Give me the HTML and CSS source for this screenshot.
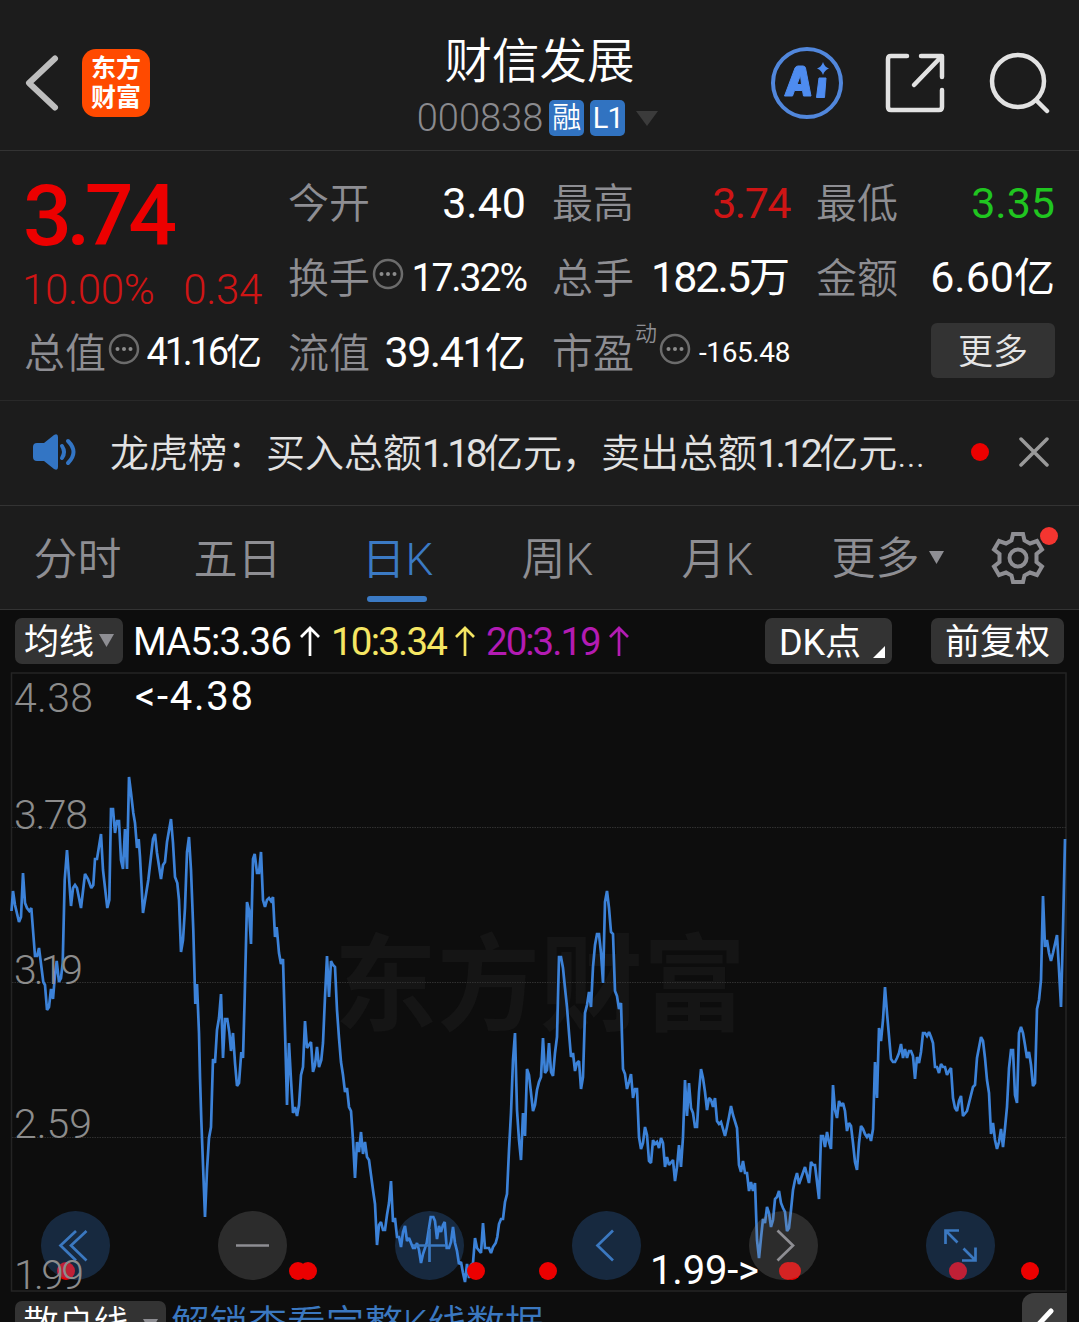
FILE: index.html
```html
<!DOCTYPE html>
<html lang="zh-CN">
<head>
<meta charset="utf-8">
<title>财信发展 000838</title>
<link rel="stylesheet" href="styles.css">
</head>
<body>
<header class="header">
  <div class="header-left">
    <svg class="back" width="36" height="60" viewBox="0 0 36 60"><path d="M31 5.500 L5 30 L31 54.500" fill="none" stroke="#bdbdbd" stroke-width="6" stroke-linecap="round" stroke-linejoin="round"/></svg>
    <div class="logo"><span>东方</span><span>财富</span></div>
  </div>
  <div class="title">
    <h1>财信发展</h1>
    <div class="code"><span class="num">000838</span><i class="badge">融</i><i class="badge level">L1</i><svg width="22" height="15" viewBox="0 0 22 15"><path d="M0 0H22L11 15Z" fill="#3b3b3b"/></svg></div>
  </div>
  <div class="header-right">
    <svg width="74" height="74" viewBox="0 0 74 74"><circle cx="37" cy="37" r="34" fill="none" stroke="#5187dc" stroke-width="4"/><g fill="#4e8cf0" stroke="#4e8cf0" stroke-width="1" stroke-linejoin="round"><path fill-rule="evenodd" d="M14.500 50L25 22Q26 20 28 20H33Q35 20 35.500 22L41 50H33.500L32.500 44.500H24.500L22.500 50ZM27 38.500H31.500L30.500 29Z"/><path d="M49 32H56L54.500 51.500H46.500Z"/></g><path d="M53 16 Q54.500 21 59 22.500 Q54.500 24 53 29 Q51.500 24 47 22.500 Q51.500 21 53 16Z" fill="#4e8cf0"/></svg>
    <svg width="60" height="60" viewBox="0 0 60 60"><g fill="none" stroke="#e2e2e2" stroke-width="4.500" stroke-linecap="round" stroke-linejoin="round"><path d="M22 3H6Q3 3 3 6V54Q3 57 6 57H54Q57 57 57 54V37"/><path d="M36 3H57V24M56 4L29 32"/></g></svg>
    <svg width="62" height="62" viewBox="0 0 62 62"><g fill="none" stroke="#e2e2e2" stroke-width="4.500" stroke-linecap="round"><circle cx="30" cy="29" r="26"/><path d="M48.500 48.500L59 59"/></g></svg>
  </div>
</header>

<section class="quote">
  <div class="last">
    <strong>3.74</strong>
    <div class="change"><span>10.00%</span><span>0.34</span></div>
  </div>
  <div class="cell"><label>今开</label><b>3.40</b></div>
  <div class="cell"><label>最高</label><b class="up">3.74</b></div>
  <div class="cell"><label>最低</label><b class="down">3.35</b></div>
  <div class="cell"><label>换手</label><svg class="info" width="32" height="32" viewBox="0 0 32 32"><circle cx="16" cy="16" r="14" fill="none" stroke="#6c6c6c" stroke-width="2.500"/><g fill="#8c8c8c"><circle cx="9.500" cy="16" r="2"/><circle cx="16" cy="16" r="2"/><circle cx="22.500" cy="16" r="2"/></g></svg><b class="mid">17.32%</b></div>
  <div class="cell"><label>总手</label><b class="tight">182.5<em>万</em></b></div>
  <div class="cell"><label>金额</label><b>6.60<em>亿</em></b></div>
  <div class="cell"><label>总值</label><svg class="info" width="32" height="32" viewBox="0 0 32 32"><circle cx="16" cy="16" r="14" fill="none" stroke="#6c6c6c" stroke-width="2.500"/><g fill="#8c8c8c"><circle cx="9.500" cy="16" r="2"/><circle cx="16" cy="16" r="2"/><circle cx="22.500" cy="16" r="2"/></g></svg><b class="mid narrow">41.16<em>亿</em></b></div>
  <div class="cell"><label>流值</label><b class="tight wide">39.41<em>亿</em></b></div>
  <div class="cell"><label>市盈</label><sup>动</sup><svg class="info" width="32" height="32" viewBox="0 0 32 32"><circle cx="16" cy="16" r="14" fill="none" stroke="#6c6c6c" stroke-width="2.500"/><g fill="#8c8c8c"><circle cx="9.500" cy="16" r="2"/><circle cx="16" cy="16" r="2"/><circle cx="22.500" cy="16" r="2"/></g></svg><b class="small">-165.48</b></div>
  <div class="cell end"><button class="more">更多</button></div>
</section>

<section class="news">
  <svg width="46" height="36" viewBox="0 0 46 36"><path d="M5 9H12L22 1Q26 -1 26 3V33Q26 37 22 35L12 27H5Q1 27 1 23V13Q1 9 5 9Z" fill="#3375c4"/><g fill="none" stroke="#3375c4" stroke-width="4" stroke-linecap="round"><path d="M30 12Q34 18 30 24M36 7Q47 18 36 29"/></g></svg>
  <p>龙虎榜：买入总额<span class="amount">1.18</span>亿元，卖出总额<span class="amount">1.12</span>亿元...</p>
  <i class="dot"></i>
  <svg width="30" height="30" viewBox="0 0 30 30"><path d="M2 2L28 28M28 2L2 28" stroke="#9a9a9a" stroke-width="3.500" stroke-linecap="round"/></svg>
</section>

<nav class="tabs">
  <a>分时</a><a>五日</a><a class="active">日K</a><a>周K</a><a>月K</a>
  <a class="drop">更多<svg width="15" height="13" viewBox="0 0 15 13"><path d="M0 0H15L7.500 13Z" fill="#8e8e93"/></svg></a>
  <div class="gear">
    <svg width="54" height="54" viewBox="-27 -27 54 54"><g fill="none" stroke="#8e8e93" stroke-width="4"><circle r="8.500"/><path d="M-5 -24H5L6.500 -17.500L12 -14.500L19 -17L24 -8.500L18.500 -4V4L24 8.500L19 17L12 14.500L6.500 17.500L5 24H-5L-6.500 17.500L-12 14.500L-19 17L-24 8.500L-18.500 4V-4L-24 -8.500L-19 -17L-12 -14.500L-6.500 -17.500Z"/></g></svg>
    <i class="dot"></i>
  </div>
</nav>

<main class="panel">
  <div class="toolbar">
    <button class="chip ma">均线<svg width="15" height="13" viewBox="0 0 15 13"><path d="M0 0H15L7.500 13Z" fill="#8e8e93"/></svg></button>
    <span class="ma5">MA5:3.36<svg class="arrow" width="20" height="30" viewBox="0 0 20 30"><path d="M10 30V2M1 11L10 2L19 11"/></svg></span>
    <span class="ma10">10:3.34<svg class="arrow" width="20" height="30" viewBox="0 0 20 30"><path d="M10 30V2M1 11L10 2L19 11"/></svg></span>
    <span class="ma20">20:3.19<svg class="arrow" width="20" height="30" viewBox="0 0 20 30"><path d="M10 30V2M1 11L10 2L19 11"/></svg></span>
    <button class="chip dk">DK点<svg width="12" height="12" viewBox="0 0 12 12"><path d="M12 0V12H0Z" fill="#fff"/></svg></button>
    <button class="chip fq">前复权</button>
  </div>
  <svg class="chart" width="1079" height="621" viewBox="0 672 1079 621">
    <text class="watermark" x="334" y="1022" textLength="412" lengthAdjust="spacingAndGlyphs">东方财富</text>
    <rect x="11.500" y="673" width="1054.500" height="618" fill="none" stroke="#242424" stroke-width="1.500"/>
    <path d="M12 827.500H1066M12 982.500H1066M12 1137.500H1066" stroke="#303030" stroke-width="1" stroke-dasharray="1.500 1"/>
    <polyline class="line" points="11.500,911 13,891 15,905 19,922 21,917 23,873 25,903 27,908 29.300,911 31.300,908 35,956 37,956 39,948 43.300,982 45,985 47,1010 49,1007 51,989 53,999 55,975 56.700,961 59,982 61,978 62.700,963 64.700,880 67,850 71,906 73,888 75,885 77,888 81,908 85,874 88,879 91.300,888 93.300,885 95,859 97,859 101,834 103,870 107.300,908 109.300,900 111,809 113,809 115,833 117,821 119,821 121,860 123,869 125,829 127,869 129,777 131,793 133.300,813 135,823 137,848 138.700,839 140,857 143,913 148.300,880 153,839 155,834 157,853 161,879 163,865 165,862 167,842 171,819 173,843 175,877 177.300,883 179,900 181,952 183,940 185,908 187,852 189,837 191,870 193.300,930 195.300,1004 197,984 199,1033 200,1077 201.300,1120 205,1217 207,1170 209,1138 211,1127 213,1059 215,1063 217,1030 219,1018 221,994 223,1058 225,1019 227.300,1019 229.300,1032 231,1051 233,1033 235,1063 237,1086 239,1083 241.300,1052 243,1058 244.700,997 247,902 249,910 251,944 253,859 254.700,854 257,873 259,873 261,852 263,900 265,907 267,900 269,898 271,901 273,897 275,937 276.700,927 279,953 281,964 283,959 285,1030 287,1105 289,1043 291,1080 293,1113 295,1107 297,1116 299,1105 301,1075 303,1067 305,1021 307,1048 309,1045 311,1042 313,1072 315,1065 317,1047 319,1067 321.300,1060 323,1043 325,997 327,956 329,997 331,961 333,965 335,967 337,1010 339,1038 341,1062 343,1075 345,1092 347,1088 349,1107 351,1111 353,1140 355,1178 357,1142 359,1152 361,1132 363,1154 365,1142 367,1157 369,1160 371,1175 373,1190 375,1204 377,1245 379,1225 381,1222 383,1230 385,1230 387,1215 389,1203 391,1181 393,1222 395,1218 397,1237 399,1237 401,1247 403,1232 405,1226 407,1241 409,1238 413,1248 415,1248 417,1243 419,1250 421,1263 423,1254 426.700,1243 428.700,1230 430.700,1217 433.300,1217 435,1221 437,1239 439,1226 441,1232 443,1225 444.700,1222 446.700,1248 449,1248 451,1242 453,1227 455,1243 457,1251 459,1264 461,1262 463,1273 465,1282 467,1264 469,1278 471,1265 473,1263 475,1238 477,1248 481,1253 483,1223 485,1248 489,1248 491,1253 493,1247 495.700,1243 497.300,1237 499,1224 501,1219 503,1219 505,1202 507,1194 509,1150 511,1113 513,1060 515,1033 517,1110 519,1140 521,1160 523,1113 525,1136 527,1069 529,1075 531,1093 533,1111 535,1105 537,1090 539,1082 541,1077 543,1038 545,1073 547,1070 549,1043 551,1072 553,1076 555,1053 557,1037 559,957 561,957 563,968 565,988 567,1007 569,1033 571,1057 573,1053 575,1071 577,1063 579,1061 581,1089 583,1077 585,1013 587,1005 589,992 591,1007 593,967 595,945 597,934 599,934 601,953 603,983 605,902 607,891 609,908 611,932 613,934 615,991 617,996 619,1009 621,1003 623,1069 625,1074 627,1089 629,1082 631,1074 633,1098 635,1089 637,1089 639,1137 641,1149 643,1143 645,1127 647,1135 649,1161 651,1163 653,1140 655,1144 657,1142 659,1148 661,1138 663,1143 665,1167 667,1157 669,1165 673,1160 675,1181 677,1167 679,1145 681,1167 683,1137 685,1080 687,1116 689,1083 691,1108 693,1113 695,1127 697,1127 699,1092 701,1069 703,1078 705,1092 707,1110 709,1098 711,1100 713,1107 715,1098 717,1121 719,1124 721,1122 725,1136 727,1127 729,1117 731,1106 733,1115 737,1128 739,1165 741,1172 743,1161 745,1173 747,1173 749,1191 751,1182 753,1191 755,1183 757,1240 759,1258 761,1238 763,1219 765,1223 767,1207 769,1213 771,1227 773,1220 775,1199 777,1197 779,1191 781,1203 783,1208 785,1212 787,1231 789,1228 791,1210 793,1190 795,1180 797,1173 799,1184 805,1167 809,1183 811,1162 813,1165 815,1165 817,1182 819,1199 821,1136 823,1136 825,1147 827,1132 829,1142 831,1149 833,1085 835,1110 837,1118 839,1101 841,1106 843,1103 845,1111 847,1131 849,1123 851,1126 853,1143 855,1162 857,1170 859,1143 861,1126 863,1129 865,1134 867,1137 869,1134 871,1141 873,1129 875,1062 877,1098 879,1028 881,1041 883,1020 885,987 887,1013 891,1059 893,1062 895,1062 897,1058 899,1053 901,1044 903,1058 905,1049 907,1058 909,1051 911,1051 913,1056 915,1079 917,1057 919,1063 921,1052 923,1033 925,1033 927,1036 929,1032 931,1037 933,1043 935,1067 937,1067 939,1073 941,1064 943,1067 945,1067 947,1075 949,1071 951,1068 953,1098 955,1108 957,1111 959,1101 961,1096 963,1116 967,1111 969,1103 973,1087 975,1085 977,1058 981,1037 983,1041 985,1058 987,1080 989,1093 991,1134 993,1123 995,1140 997,1149 999,1142 1001,1129 1003,1147 1005,1128 1007,1107 1009,1068 1011,1050 1013,1050 1015,1095 1017,1103 1019,1033 1021,1027 1023,1033 1025,1045 1027,1058 1029,1052 1031,1065 1033,1086 1035,1083 1037,1009 1039,1000 1041,980 1043,896 1045,947 1047,940 1049,953 1051,961 1053,953 1057,935 1059,970 1061,1007 1063,930 1065,839"/>
    <g fill="#ec0000">
      <circle cx="66" cy="1271" r="9"/><circle cx="298" cy="1271" r="9"/><circle cx="308" cy="1271" r="9"/><circle cx="476" cy="1271" r="9"/><circle cx="548" cy="1271" r="9"/><circle cx="788" cy="1271" r="9"/><circle cx="792" cy="1271" r="9"/><circle cx="958" cy="1271" r="9"/><circle cx="1030" cy="1271" r="9"/>
    </g>
    <g fill="#3981d9" fill-opacity=".25"><circle cx="75.500" cy="1245.500" r="34.500"/><circle cx="429.500" cy="1245.500" r="34.500"/><circle cx="606.500" cy="1245.500" r="34.500"/><circle cx="960.500" cy="1245.500" r="34.500"/></g>
    <g fill="#8a8a8a" fill-opacity=".25"><circle cx="252.500" cy="1245.500" r="34.500"/><circle cx="783.500" cy="1245.500" r="34.500"/></g>
    <g fill="none" stroke="#3b78c0" stroke-width="2.700">
      <path d="M76 1231L60.500 1245.500L76 1260.500M86.500 1231L71 1245.500L86.500 1260.500"/>
      <path d="M413 1245.500H446M429.500 1229V1262"/>
      <path d="M613 1230.500L597.500 1245.500L613 1260.500"/>
      <path d="M945.500 1244V1230.500H959M946 1231L957.500 1242.500M975.500 1247.500V1260.500H962M975 1260L963.500 1248.500"/>
    </g>
    <g fill="none" stroke="#8e8e93" stroke-width="2.700"><path d="M236 1245.500H269"/><path d="M777.500 1230.500L793 1245.500L777.500 1260.500"/></g>
    <g class="axis">
      <text x="14" y="712" textLength="79">4.38</text>
      <text x="14" y="829" textLength="74">3.78</text>
      <text x="14" y="984" textLength="69">3.19</text>
      <text x="14" y="1138" textLength="78">2.59</text>
      <text x="14" y="1289" textLength="70">1.99</text>
    </g>
    <g class="marks">
      <text x="135" y="710" textLength="118">&lt;-4.38</text>
      <text x="650" y="1284" textLength="109">1.99-&gt;</text>
    </g>
  </svg>
  <div class="footer">
    <button class="chip retail">散户线<svg width="15" height="13" viewBox="0 0 15 13"><path d="M0 0H15L7.500 13Z" fill="#8e8e93"/></svg></button>
    <span class="unlock">解锁查看完整K线数据</span>
    <div class="edit"><svg width="45" height="40" viewBox="0 0 45 40"><path d="M29 18L15 33" stroke="#fff" stroke-width="5" stroke-linecap="round"/></svg></div>
  </div>
</main>
</body>
</html>
```
FILE: styles.css
```css
* { box-sizing: border-box; margin: 0; padding: 0; }
html, body { height: 1322px; overflow: hidden; }
body {
  width: 1079px;
  background: #1c1c1c;
  color: #fff;
  font-family: Roboto, "Noto Sans CJK SC", sans-serif;
  font-weight: 350;
}
i, em { font-style: normal; }
svg { display: block; flex: none; }
button { border: 0; color: #fff; font: inherit; background: #333; }

.header {
  height: 151px;
  display: grid;
  grid-template-columns: 380px 1fr 380px;
  border-bottom: 1px solid #333;
}
.header-left { display: flex; align-items: center; padding: 16px 0 0 24px; }
.logo {
  width: 68px;
  height: 68px;
  margin-left: 22px;
  padding-bottom: 4px;
  border-radius: 14px;
  background: #ff4a00;
  display: flex;
  flex-direction: column;
  align-items: center;
  justify-content: center;
  font: 700 25px/29px "Noto Sans CJK SC", sans-serif;
}
.title { display: flex; flex-direction: column; align-items: center; padding-top: 34px; white-space: nowrap; }
.title h1 { font-size: 47.500px; font-weight: 350; line-height: 56px; }
.code { display: flex; align-items: center; height: 36px; margin: 10px 4px 0 0; gap: 6px; color: #8a8a8e; }
.code .num { font-size: 38px; line-height: 38px; }
.code svg { margin-left: 5px; }
.badge {
  height: 36px;
  width: 35px;
  border-radius: 5px;
  background: #3173c1;
  color: #fff;
  font-size: 29px;
  line-height: 37px;
  text-align: center;
}
.level { letter-spacing: -1px; font-weight: 400; }
.header-right { display: flex; align-items: center; padding: 16px 0 0 71px; }
.header-right svg:nth-child(2) { margin-left: 41px; }
.header-right svg:nth-child(3) { margin-left: 43px; }

.quote {
  height: 250px;
  padding: 14px 0 10px 24px;
  display: grid;
  grid-template-columns: 238px 238px 238px 239px;
  grid-template-rows: 75px 75px 75px;
  column-gap: 26px;
  border-bottom: 1px solid #292929;
}
.last { grid-row: span 2; color: #ec0000; }
.last strong { display: block; font-weight: 500; font-size: 86px; line-height: 102px; letter-spacing: -5.500px; margin-left: -1px; }
.change { display: flex; justify-content: space-between; font-size: 42px; line-height: 46px; color: #cf1515; letter-spacing: -.3px; margin-left: -2px; }
.cell { display: flex; align-items: center; min-width: 0; white-space: nowrap; height: 75px; }
.cell label { font-size: 41px; line-height: 60px; color: #8e8e93; padding-top: 3px; }
.cell b { font-weight: 370; font-size: 43px; line-height: 60px; margin-left: auto; }
.cell em { font-size: 41px; }
.cell .up { color: #cf1515; letter-spacing: -1.500px; }
.cell .down { color: #20c520; }
.cell .mid { font-size: 39px; letter-spacing: -2px; }
.cell .narrow { font-size: 38px; letter-spacing: -3.200px; }
.cell .mid em { font-size: 36px; letter-spacing: 0; }
.cell .tight { letter-spacing: -2px; }
.cell .tight em { letter-spacing: 0; }
.cell .wide { letter-spacing: -1.500px; }
.cell .small { font-size: 28px; letter-spacing: -.4px; }
.info { margin: -8px 0 0 2px; }
.cell sup { font-size: 22px; line-height: 30px; color: #8e8e93; align-self: flex-start; margin: 4px 0 0 1px; }
.end { justify-content: flex-end; }
.more { width: 124px; height: 55px; border-radius: 6px; font-size: 35px; line-height: 54px; padding-top: 3px; color: #e6e6e6; margin-top: -5px; }

.news { height: 105px; display: flex; align-items: center; padding: 0 30px 2px 32px; border-bottom: 1px solid #333; }
.news p { margin-left: 32px; width: 830px; font-size: 39px; color: #e2e2e2; letter-spacing: 0; white-space: nowrap; margin-top: -4px; }
.amount { font-weight: 370; letter-spacing: -3.500px; }
.dot { width: 18px; height: 18px; border-radius: 50%; background: #ec0000; flex: none; }
.news .dot { margin-left: 31px; }
.news svg:last-child { margin-left: auto; }

.tabs { height: 104px; display: flex; border-bottom: 1px solid #333; color: #8e8e93; font-size: 44px; line-height: 108px; }
.tabs a { width: 160px; height: 103px; text-align: center; flex: none; padding-left: 1px; }
.tabs .active { color: #3b7ac4; }
.tabs .active::after { content: ""; display: block; width: 60px; height: 6px; margin: -18px 0 0 49px; border-radius: 3px; background: #3b7ac4; }
.tabs a:first-child { width: 157px; padding: 0 2px 0 0; }
.tabs .drop { width: 175px; display: flex; align-items: center; justify-content: center; gap: 9px; padding: 3px 0 0 6px; }
.drop svg { margin-top: -4px; }
.gear { position: relative; width: 54px; height: 54px; margin: 25px 0 0 19px; }
.gear .dot { position: absolute; left: 49px; top: -4px; background: #f43530; }

.panel { height: 712px; background: #0d0d0d; overflow: hidden; }
.toolbar { height: 62px; display: flex; align-items: center; padding-left: 15px; font-size: 38.500px; white-space: nowrap; font-weight: 370; }
.chip { height: 46px; border-radius: 7px; font-size: 35px; line-height: 46px; padding-top: 4px; display: flex; align-items: center; justify-content: center; flex: none; }
.ma { width: 108px; gap: 5px; }
.ma svg { margin-top: -5px; }
.toolbar span { display: flex; align-items: center; gap: 9px; line-height: 50px; padding-top: 2px; }
.arrow { margin-top: -2px; }
.arrow path { fill: none; stroke: currentColor; stroke-width: 2.700; }
.ma5 { margin-left: 10px; width: 198px; letter-spacing: -.9px; }
.ma10 { color: #f5e663; width: 155px; letter-spacing: -1.800px; }
.ma20 { color: #b31bb3; width: 279px; letter-spacing: -2px; }
.dk { width: 127px; gap: 12px; padding-left: 7px; font-size: 36px; }
.dk svg { margin-top: 18px; }
.fq { width: 133px; margin-left: 39px; }
.chart { width: 1079px; height: 621px; }
.watermark { font: 700 105px "Noto Sans CJK SC", sans-serif; fill: #151515; }
.line { fill: none; stroke: #3c82d8; stroke-width: 2.700; stroke-linejoin: miter; stroke-miterlimit: 2; }
.axis { font-size: 41px; fill: #8c8c8c; }
.marks { font-size: 40px; font-weight: 370; fill: #fff; }
.footer { display: flex; padding-left: 15px; height: 40px; }
.retail { margin-top: 8px; width: 151px; gap: 14px; height: 48px; line-height: 42px; padding-top: 0; }
.unlock { margin-left: 5px; color: #3b78c0; font-size: 38.700px; line-height: 64px; white-space: nowrap; }
.edit { margin-left: auto; margin-right: 12px; width: 45px; height: 50px; border-top-left-radius: 12px; background: #3d3d3d; flex: none; }
```
